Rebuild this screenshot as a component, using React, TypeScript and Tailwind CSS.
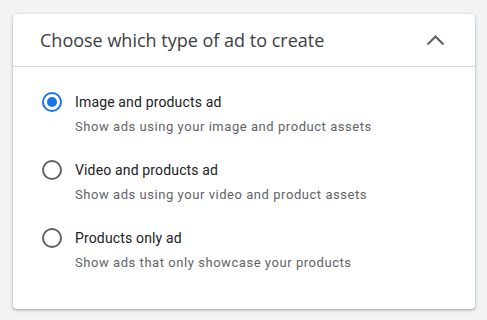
import { useState } from 'react'

const options = [
  { id: 'image', label: 'Image and products ad', desc: 'Show ads using your image and product assets' },
  { id: 'video', label: 'Video and products ad', desc: 'Show ads using your video and product assets' },
  { id: 'products', label: 'Products only ad', desc: 'Show ads that only showcase your products' },
]

export default function App() {
  const [selected, setSelected] = useState('image')

  return (
    <div className="w-[487px] h-[320px] bg-[#f1f3f4] pt-[14px] pl-[13px] font-['Roboto',sans-serif]">
      <div className="w-[462px] h-[295px] bg-white rounded-[4px] shadow-[0_1px_2px_rgba(60,64,67,0.3),0_1px_3px_1px_rgba(60,64,67,0.15)]">
        {/* Header */}
        <div className="h-[53px] flex items-center justify-between pl-[27px] pr-[30px] border-b border-[#dadce0]">
          <h2 className="text-[18px] text-[#3c4043] font-['Open_Sans',sans-serif]">
            Choose which type of ad to create
          </h2>
          <svg width="19" height="12" viewBox="0 0 19 12" className="text-[#5f6368]">
            <polyline points="1.5,10.5 9.5,2.5 17.5,10.5" fill="none" stroke="currentColor" strokeWidth="2.2" />
          </svg>
        </div>

        {/* Options */}
        <div className="pt-[25px] pl-[29px] flex flex-col gap-[25px]">
          {options.map((o) => (
            <label key={o.id} className="flex gap-[13px] cursor-pointer" onClick={() => setSelected(o.id)}>
              <span
                className={`w-[20px] h-[20px] rounded-full border-2 flex items-center justify-center shrink-0 ${
                  selected === o.id ? 'border-[#1a73e8]' : 'border-[#5f6368]'
                }`}
              >
                {selected === o.id && <span className="w-[10px] h-[10px] rounded-full bg-[#1a73e8]" />}
              </span>
              <div>
                <div className="text-[14px] leading-[20px] tracking-[0.15px] text-[#202124]">{o.label}</div>
                <div className="mt-[7px] text-[13px] leading-[16px] tracking-[0.55px] text-[#5f6368]">{o.desc}</div>
              </div>
            </label>
          ))}
        </div>
      </div>
    </div>
  )
}
